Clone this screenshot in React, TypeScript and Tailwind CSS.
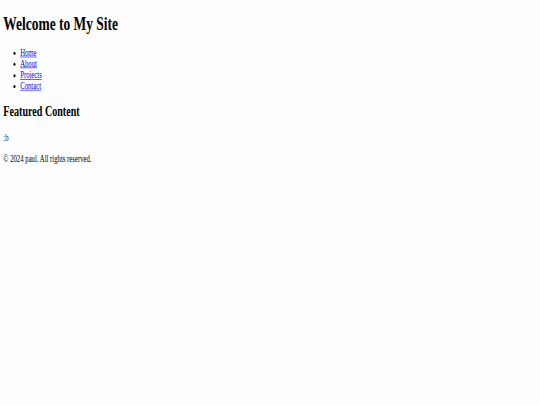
export default function App() {
  const links = ['Home', 'About', 'Projects', 'Contact']

  return (
    <div className="w-[540px] h-[405px] overflow-hidden bg-[#fdfdfd] text-black antialiased font-['Liberation_Serif','Times_New_Roman',serif]">
      {/* page rendered at desktop size, squeezed into the frame */}
      <div className="w-[1286px] origin-top-left scale-x-[0.42] scale-y-[0.603] px-2 pt-[21px] text-[16px] leading-[1.15]">
        <header>
          <h1 className="text-[32px] font-bold mb-[21px]">Welcome to My Site</h1>
          <nav>
            <ul className="list-disc pl-10 mb-[20px]">
              {links.map((link) => (
                <li key={link}>
                  <a href="#" className="text-[#0000ee] underline">
                    {link}
                  </a>
                </li>
              ))}
            </ul>
          </nav>
        </header>

        <main>
          <h2 className="text-[24px] font-bold mb-[20px]">Featured Content</h2>
          <p className="mb-4 text-[#222]">:b</p>
        </main>

        <footer>
          <p>© 2024 paul. All rights reserved.</p>
        </footer>
      </div>
    </div>
  )
}
